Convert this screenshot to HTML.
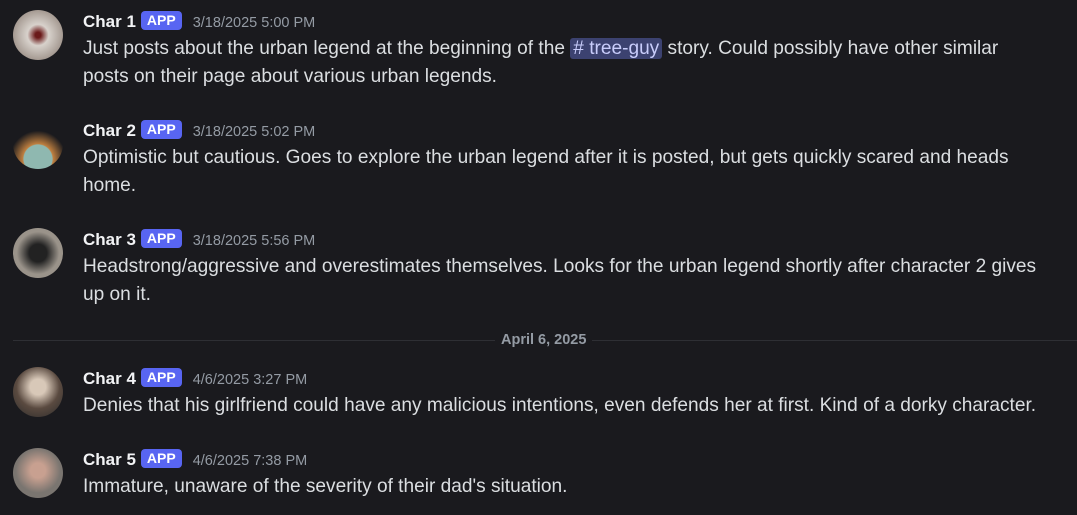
<!DOCTYPE html>
<html><head><style>
body{margin:0;width:1077px;height:515px;background:#1a1a1e;font-family:"Liberation Sans",sans-serif;overflow:hidden;position:relative;color:#dbdee1}
.m{position:absolute;left:0;width:1077px}
.av{position:absolute;left:13px;width:50px;height:50px;border-radius:50%}
.h{position:absolute;left:83px;top:1px;height:24px;line-height:24px;white-space:nowrap}
.n{color:#f2f3f5;font-size:17px;font-weight:bold}
.b{display:inline-block;background:#5865f2;color:#fff;font-size:14px;font-weight:bold;border-radius:4px;padding:0 6px;height:19px;line-height:19px;vertical-align:2px;margin-left:5px}
.t{color:#949ba4;font-size:14.5px;margin-left:11px}
.x{position:absolute;left:83px;top:26px;width:962px;font-size:19.1px;line-height:28px}
.ch{background:#3c4270;color:#c9cdfb;border-radius:3px;padding:0 3px}
.d{position:absolute;left:13px;right:0;top:340px;border-top:1px solid #2e2f34}
.dl{position:absolute;left:495px;top:332px;background:#1a1a1e;padding:0 6px;color:#949ba4;font-size:14.5px;font-weight:bold}
</style></head><body>
<div class="m" style="top:9px"><div class="av" style="top:1px;background:radial-gradient(circle at 50% 50%,#6b1a1a 8%,#d8d2cc 30%,#a59a92 70%)"></div>
<div class="h"><span class="n">Char 1</span><span class="b">APP</span><span class="t">3/18/2025 5:00 PM</span></div>
<div class="x">Just posts about the urban legend at the beginning of the <span class="ch"># tree-guy</span> story. Could possibly have other similar posts on their page about various urban legends.</div></div>
<div class="m" style="top:118px"><div class="av" style="top:1px;background:radial-gradient(circle at 50% 80%,#8fb8b0 30%,#c08040 32%,#1a1a1e 60%)"></div>
<div class="h"><span class="n">Char 2</span><span class="b">APP</span><span class="t">3/18/2025 5:02 PM</span></div>
<div class="x">Optimistic but cautious. Goes to explore the urban legend after it is posted, but gets quickly scared and heads home.</div></div>
<div class="m" style="top:227px"><div class="av" style="top:1px;background:radial-gradient(circle at 50% 50%,#222 25%,#9a938a 60%)"></div>
<div class="h"><span class="n">Char 3</span><span class="b">APP</span><span class="t">3/18/2025 5:56 PM</span></div>
<div class="x">Headstrong/aggressive and overestimates themselves. Looks for the urban legend shortly after character 2 gives up on it.</div></div>
<div class="d"></div><div class="dl">April 6, 2025</div>
<div class="m" style="top:366px"><div class="av" style="top:1px;background:radial-gradient(circle at 50% 40%,#d8c8b8 20%,#5a4a40 55%,#2a2a2a)"></div>
<div class="h"><span class="n">Char 4</span><span class="b">APP</span><span class="t">4/6/2025 3:27 PM</span></div>
<div class="x" style="white-space:nowrap">Denies that his girlfriend could have any malicious intentions, even defends her at first. Kind of a dorky character.</div></div>
<div class="m" style="top:447px"><div class="av" style="top:1px;background:radial-gradient(circle at 50% 45%,#c8a090 20%,#7a7570 60%)"></div>
<div class="h"><span class="n">Char 5</span><span class="b">APP</span><span class="t">4/6/2025 7:38 PM</span></div>
<div class="x">Immature, unaware of the severity of their dad's situation.</div></div>
</body></html>
